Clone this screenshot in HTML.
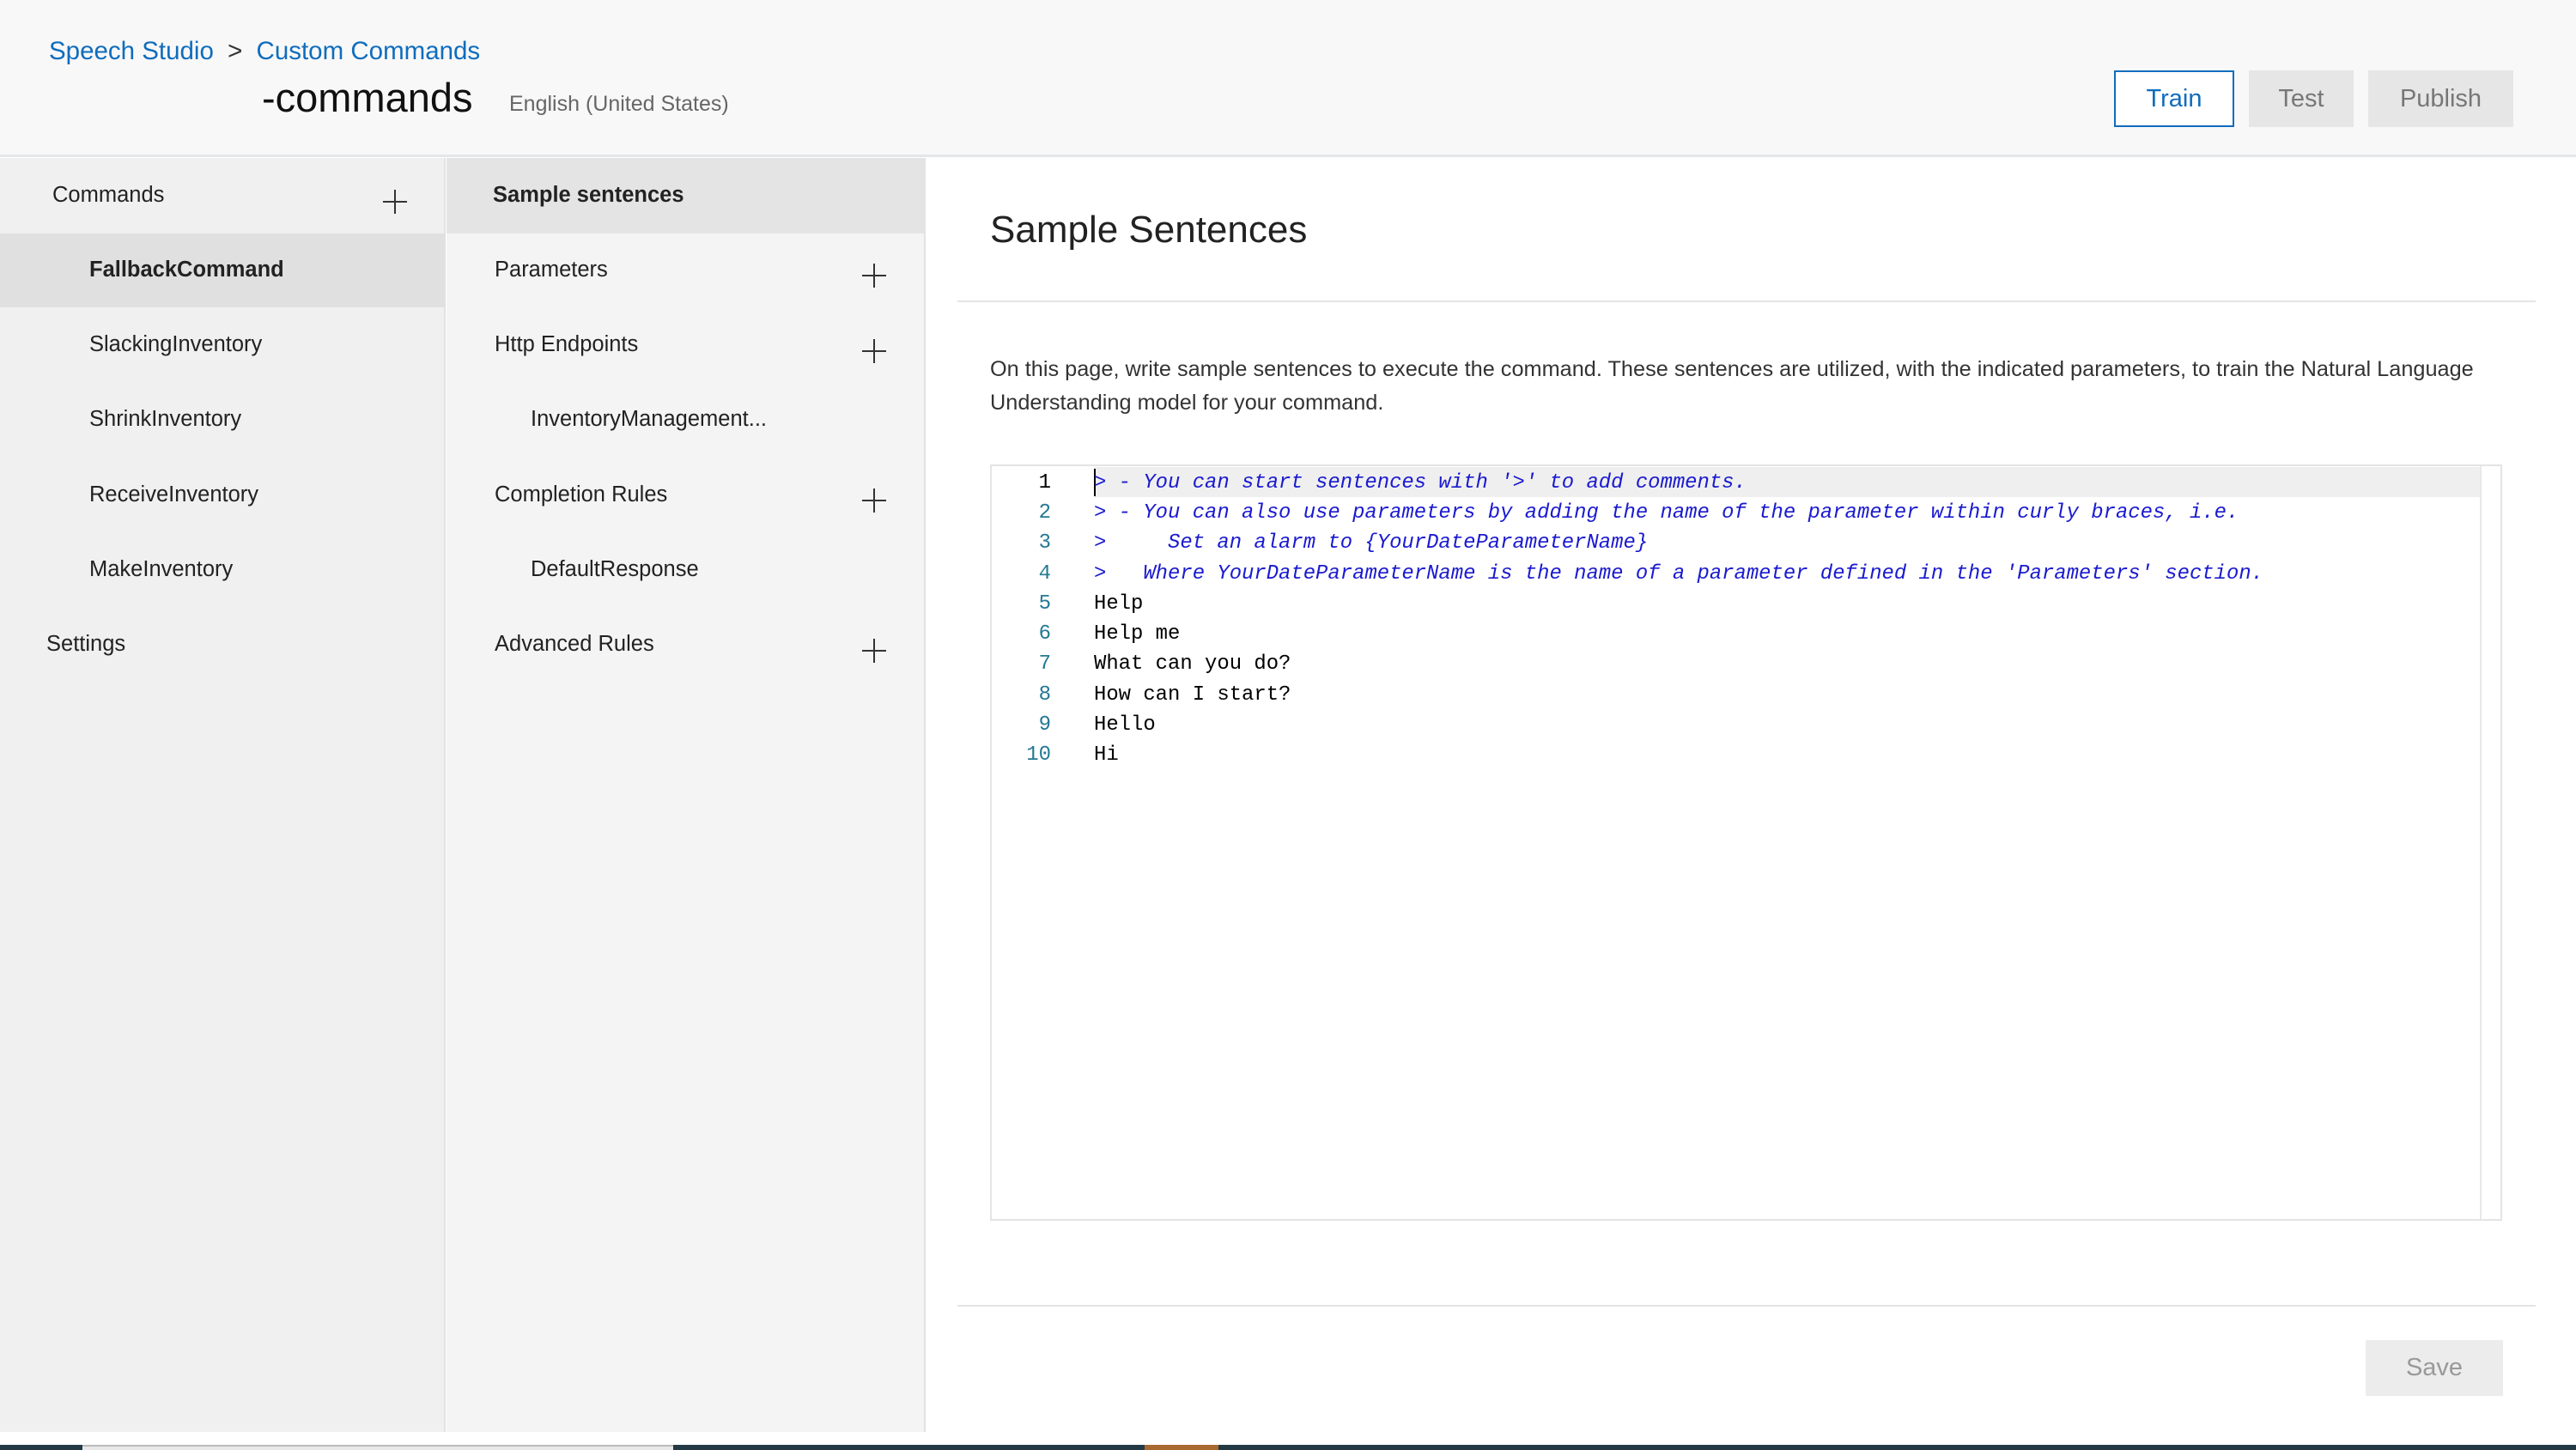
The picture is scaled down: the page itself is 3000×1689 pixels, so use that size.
<!DOCTYPE html>
<html><head><meta charset="utf-8"><style>
*{margin:0;padding:0;box-sizing:border-box}
body{width:3000px;height:1689px;overflow:hidden;background:#fff;font-family:"Liberation Sans",sans-serif;position:relative;color:#222}
.a{position:absolute;white-space:nowrap}
.hdr{position:absolute;left:0;top:0;width:3000px;height:183px;background:#f8f8f8;border-bottom:3px solid #e4e6e8}
.btn{position:absolute;height:66px;font-size:29px;display:flex;align-items:center;justify-content:center}
.plus{position:absolute;width:28px;height:28px}
.plus:before{content:"";position:absolute;left:13px;top:0;width:2px;height:28px;background:#333}
.plus:after{content:"";position:absolute;top:13px;left:0;height:2px;width:28px;background:#333}
.it{position:absolute;font-size:25.5px;color:#222;white-space:nowrap}
.ln{position:absolute;width:70px;text-align:right;left:1154px;font-family:"Liberation Mono",monospace;font-size:24px;color:#237893}
.cd{position:absolute;left:1274px;font-family:"Liberation Mono",monospace;font-size:23.9px;color:#000;white-space:pre}
.cm{color:#1a1ad0;font-style:italic}
</style></head><body>
<div class="hdr"></div>
<div class="a" style="left:57px;top:43px;font-size:29.5px;color:#0f6cbd">Speech Studio <span style="color:#333;margin:0 8px">&gt;</span> Custom Commands</div>
<div class="a" style="left:305px;top:86px;font-size:47px;color:#111">-commands</div>
<div class="a" style="left:593px;top:107px;font-size:25px;color:#666">English (United States)</div>
<div class="btn" style="left:2462px;top:82px;width:140px;border:2px solid #0f6cbd;background:#fff;color:#0f6cbd">Train</div>
<div class="btn" style="left:2619px;top:82px;width:122px;background:#e6e6e6;color:#777">Test</div>
<div class="btn" style="left:2758px;top:82px;width:169px;background:#e6e6e6;color:#777">Publish</div>

<div style="position:absolute;left:0;top:184px;width:519px;height:1484px;background:#f0f0f0;border-right:2px solid #e2e2e2"></div>
<div style="position:absolute;left:520px;top:184px;width:558px;height:1484px;background:#f4f4f4;border-right:2px solid #e2e2e2"></div>
<div style="position:absolute;left:0;top:272px;width:519px;height:86px;background:#e0e0e0"></div>
<div style="position:absolute;left:520px;top:184px;width:557px;height:88px;background:#e4e4e4"></div>

<div class="it" style="left:61px;top:213px">Commands</div><div class="plus" style="left:446px;top:221px"></div>
<div class="it" style="left:104px;top:300px;font-weight:bold">FallbackCommand</div>
<div class="it" style="left:104px;top:387px">SlackingInventory</div>
<div class="it" style="left:104px;top:474px">ShrinkInventory</div>
<div class="it" style="left:104px;top:562px">ReceiveInventory</div>
<div class="it" style="left:104px;top:649px">MakeInventory</div>
<div class="it" style="left:54px;top:736px">Settings</div>

<div class="it" style="left:574px;top:213px;font-weight:bold">Sample sentences</div>
<div class="it" style="left:576px;top:300px">Parameters</div><div class="plus" style="left:1004px;top:307px"></div>
<div class="it" style="left:576px;top:387px">Http Endpoints</div><div class="plus" style="left:1004px;top:395px"></div>
<div class="it" style="left:618px;top:474px">InventoryManagement...</div>
<div class="it" style="left:576px;top:562px">Completion Rules</div><div class="plus" style="left:1004px;top:569px"></div>
<div class="it" style="left:618px;top:649px">DefaultResponse</div>
<div class="it" style="left:576px;top:736px">Advanced Rules</div><div class="plus" style="left:1004px;top:744px"></div>

<div class="a" style="left:1153px;top:243px;font-size:44px;color:#222">Sample Sentences</div>
<div style="position:absolute;left:1115px;top:350px;width:1838px;height:2px;background:#e4e4e4"></div>
<div class="a" style="left:1153px;top:411px;font-size:25.3px;color:#333;line-height:39px;white-space:normal;width:1770px">On this page, write sample sentences to execute the command. These sentences are utilized, with the indicated parameters, to train the Natural Language Understanding model for your command.</div>

<div style="position:absolute;left:1153px;top:541px;width:1761px;height:881px;border:2px solid #e4e4e4;background:#fff"></div>
<div style="position:absolute;left:1274px;top:544px;width:1615px;height:35px;background:#efefef"></div>
<div style="position:absolute;left:2888px;top:543px;width:2px;height:877px;background:#e8e8e8"></div>
<div style="position:absolute;left:1274px;top:546px;width:2px;height:32px;background:#000"></div>
<div class="ln" style="top:549px;color:#000">1</div><div class="cd cm" style="top:549px">&gt; - You can start sentences with '&gt;' to add comments.</div>
<div class="ln" style="top:584px">2</div><div class="cd cm" style="top:584px">&gt; - You can also use parameters by adding the name of the parameter within curly braces, i.e.</div>
<div class="ln" style="top:619px">3</div><div class="cd cm" style="top:619px">&gt;     Set an alarm to {YourDateParameterName}</div>
<div class="ln" style="top:655px">4</div><div class="cd cm" style="top:655px">&gt;   Where YourDateParameterName is the name of a parameter defined in the 'Parameters' section.</div>
<div class="ln" style="top:690px">5</div><div class="cd" style="top:690px">Help</div>
<div class="ln" style="top:725px">6</div><div class="cd" style="top:725px">Help me</div>
<div class="ln" style="top:760px">7</div><div class="cd" style="top:760px">What can you do?</div>
<div class="ln" style="top:796px">8</div><div class="cd" style="top:796px">How can I start?</div>
<div class="ln" style="top:831px">9</div><div class="cd" style="top:831px">Hello</div>
<div class="ln" style="top:866px">10</div><div class="cd" style="top:866px">Hi</div>

<div style="position:absolute;left:1115px;top:1520px;width:1838px;height:2px;background:#e4e4e4"></div>
<div class="btn" style="left:2755px;top:1561px;width:160px;height:65px;background:#ececec;color:#999">Save</div>

<div style="position:absolute;left:0;top:1683px;width:3000px;height:6px;background:#233a45"></div>
<div style="position:absolute;left:96px;top:1683px;width:688px;height:6px;background:#e8e8e8;border-top:2px solid #bbb"></div>
<div style="position:absolute;left:1333px;top:1683px;width:86px;height:6px;background:#a86a30"></div>
</body></html>
